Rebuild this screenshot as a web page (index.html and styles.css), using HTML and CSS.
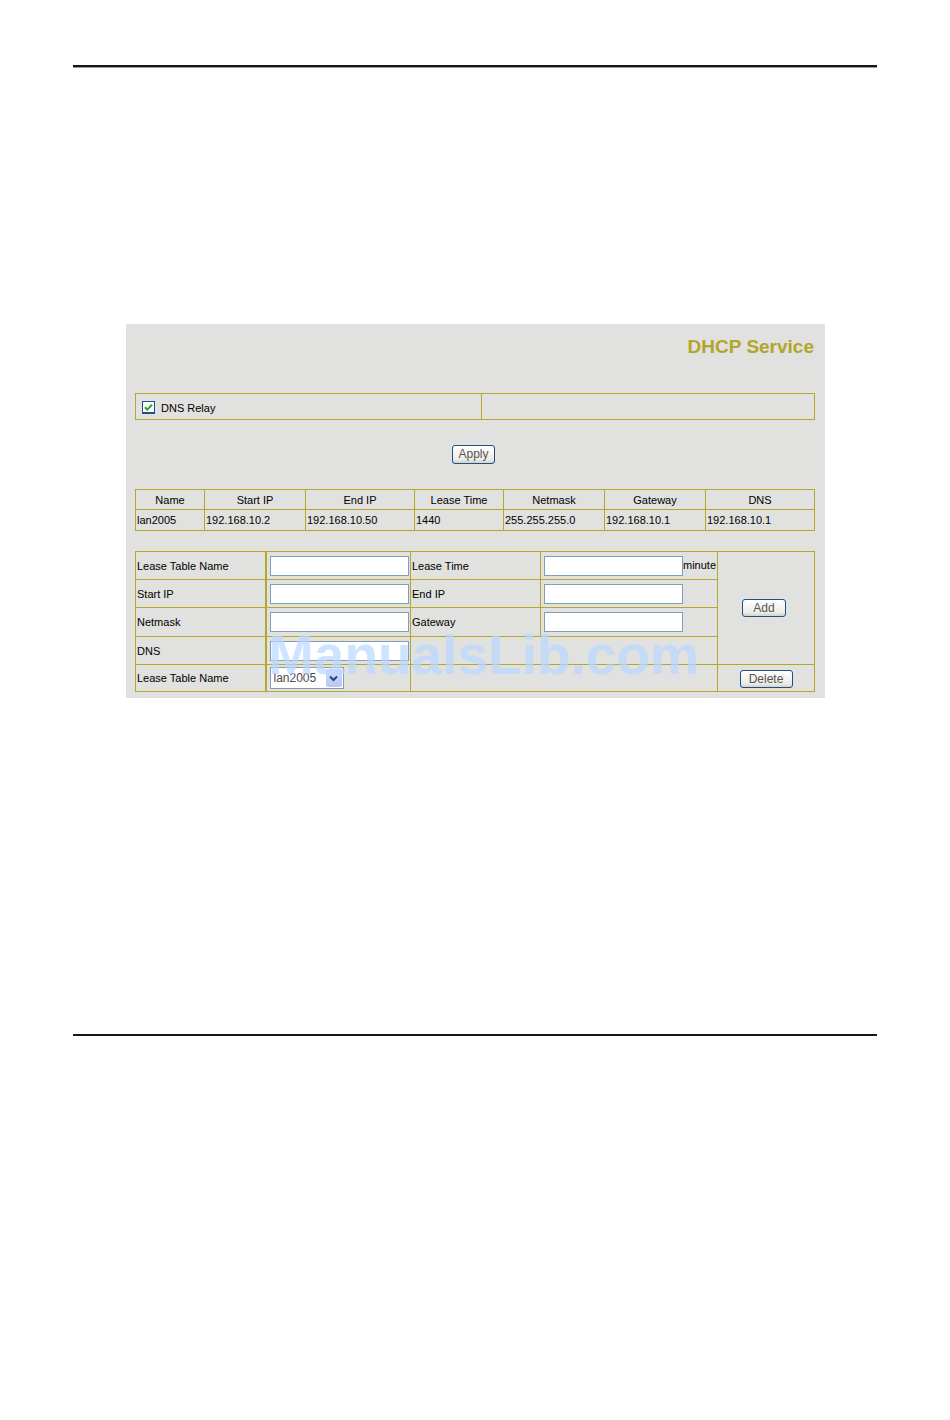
FILE: index.html
```html
<!DOCTYPE html>
<html lang="en">
<head>
    <meta charset="UTF-8">
    <meta name="viewport" content="width=device-width, initial-scale=1.0">
    <title>DHCP Service</title>
    <link rel="stylesheet" href="styles.css">
</head>
<body>
    <div class="page">
        <div class="rule"></div>

        <div class="panel">
            <h1 class="title">DHCP Service</h1>

            <!-- DNS relay switch -->
            <table class="grid relay">
                <colgroup>
                    <col class="w-346">
                    <col class="w-333">
                </colgroup>
                <tr>
                    <td>
                        <label class="check">
                            <svg class="check-box" width="13" height="13" viewBox="0 0 13 13">
                                <rect x="0.5" y="0.5" width="12" height="12" fill="#ffffff" stroke="#1c5180"/>
                                <rect x="0" y="11" width="13" height="2" fill="#1c5180"/>
                                <path d="M3 6.2 L5.3 8.6 L10 3.6" fill="none" stroke="#21a321" stroke-width="2"/>
                            </svg>
                            DNS Relay
                        </label>
                    </td>
                    <td></td>
                </tr>
            </table>

            <div class="apply-row">
                <button class="btn btn-apply">Apply</button>
            </div>

            <!-- Lease tables -->
            <table class="grid list">
                <colgroup>
                    <col class="w-69">
                    <col class="w-101">
                    <col class="w-109">
                    <col class="w-89">
                    <col class="w-101">
                    <col class="w-101">
                    <col class="w-109">
                </colgroup>
                <tr class="head">
                    <th>Name</th>
                    <th>Start IP</th>
                    <th>End IP</th>
                    <th>Lease Time</th>
                    <th>Netmask</th>
                    <th>Gateway</th>
                    <th>DNS</th>
                </tr>
                <tr class="data">
                    <td>lan2005</td>
                    <td>192.168.10.2</td>
                    <td>192.168.10.50</td>
                    <td>1440</td>
                    <td>255.255.255.0</td>
                    <td>192.168.10.1</td>
                    <td>192.168.10.1</td>
                </tr>
            </table>

            <!-- Add / delete form -->
            <table class="grid form">
                <colgroup>
                    <col class="w-130">
                    <col class="w-145">
                    <col class="w-130">
                    <col class="w-177">
                    <col class="w-97">
                </colgroup>
                <tr>
                    <td>Lease Table Name</td>
                    <td class="field"><input type="text" class="text-input"></td>
                    <td>Lease Time</td>
                    <td class="field"><input type="text" class="text-input">minute</td>
                    <td rowspan="4" class="action"><button class="btn btn-add">Add</button></td>
                </tr>
                <tr>
                    <td>Start IP</td>
                    <td class="field"><input type="text" class="text-input"></td>
                    <td>End IP</td>
                    <td class="field"><input type="text" class="text-input"></td>
                </tr>
                <tr class="tall">
                    <td>Netmask</td>
                    <td class="field"><input type="text" class="text-input"></td>
                    <td>Gateway</td>
                    <td class="field"><input type="text" class="text-input"></td>
                </tr>
                <tr>
                    <td>DNS</td>
                    <td class="field"><input type="text" class="text-input"></td>
                    <td colspan="2"></td>
                </tr>
                <tr class="short">
                    <td>Lease Table Name</td>
                    <td class="field">
                        <span class="select">
                            <select>
                                <option>lan2005</option>
                            </select>
                            <span class="select-arrow">
                                <svg width="9" height="7" viewBox="0 0 9 7">
                                    <path d="M1 1.5 L4.5 5 L8 1.5" fill="none" stroke="#29437a" stroke-width="2"/>
                                </svg>
                            </span>
                        </span>
                    </td>
                    <td colspan="2"></td>
                    <td class="action"><button class="btn btn-delete">Delete</button></td>
                </tr>
            </table>

            <div class="watermark">ManualsLib.com</div>
        </div>

        <div class="rule rule-bottom"></div>
    </div>
</body>
</html>
```

FILE: styles.css
```css
:root {
    --olive: #b4a82c;
    --title: #b1a62a;
    --panel: #e1e1df;
    --navy: #1c5180;
    --field-border: #7f9db9;
}

body {
    margin: 0;
    background: #ffffff;
    font-family: 'Liberation Sans', Arial, sans-serif;
    color: #000000;
}

.page {
    width: 950px;
    padding-top: 65px;
}

.rule {
    width: 804px;
    height: 2px;
    margin-left: 73px;
    background: #161616;
    box-shadow: 0 1px 0 #9a9a9a;
}

.rule-bottom {
    margin-top: 336px;
}

.panel {
    position: relative;
    width: 699px;
    height: 374px;
    margin: 257px 0 0 126px;
    padding: 13px 10px 0 9px;
    box-sizing: border-box;
    background: var(--panel);
}

.title {
    margin: 0 1px 0 0;
    text-align: right;
    font-size: 19px;
    line-height: 20px;
    font-weight: bold;
    color: var(--title);
}

/* tables */
.grid {
    width: 679px;
    border-collapse: collapse;
    table-layout: fixed;
    font-size: 11px;
}

.grid td,
.grid th {
    border: 1px solid var(--olive);
    padding: 0 1px;
    font-weight: normal;
    white-space: nowrap;
    overflow: hidden;
}

.w-346 { width: 346px; }
.w-333 { width: 333px; }
.w-69 { width: 69px; }
.w-89 { width: 89px; }
.w-97 { width: 97px; }
.w-101 { width: 101px; }
.w-109 { width: 109px; }
.w-130 { width: 130px; }
.w-145 { width: 145px; }
.w-177 { width: 177px; }

.relay {
    margin-top: 36px;
}

.relay td {
    height: 25px;
}

.check {
    display: flex;
    align-items: center;
    gap: 6px;
    padding-left: 5px;
    padding-top: 2px;
}

.check-box {
    display: block;
}

.apply-row {
    margin-top: 25px;
    padding-right: 3px;
    text-align: center;
    height: 19px;
}

.list {
    margin-top: 25px;
}

.list .head th {
    height: 19px;
    text-align: center;
}

.list .data td {
    height: 20px;
    text-align: left;
}

.form {
    margin-top: 20px;
}

.form td {
    height: 27px;
}

.form .tall td {
    height: 28px;
}

.form .short td {
    height: 26px;
}

.form td.field {
    padding-left: 2px;
}

.form td:nth-child(2) {
    border-left-width: 2px;
}

.form td.action {
    text-align: center;
    border-left-width: 1px;
}

.text-input {
    box-sizing: border-box;
    width: 139px;
    height: 20px;
    margin: 0 0 0 1px;
    padding: 0 2px;
    border: 1px solid var(--field-border);
    background: #ffffff;
    vertical-align: middle;
    font-size: 11px;
}

/* select */
.select {
    position: relative;
    display: inline-block;
    box-sizing: border-box;
    width: 74px;
    height: 22px;
    margin-left: 1px;
    border: 1px solid var(--field-border);
    background: #ffffff;
    vertical-align: middle;
}

.select select {
    appearance: none;
    -webkit-appearance: none;
    width: 100%;
    height: 100%;
    margin: 0;
    padding: 0 0 0 3px;
    border: 0;
    background: transparent;
    font-family: 'Liberation Sans', Arial, sans-serif;
    font-size: 12px;
    color: #4a4a4a;
}

.select-arrow {
    position: absolute;
    top: 1px;
    right: 1px;
    width: 16px;
    height: 18px;
    border-radius: 2px;
    background: linear-gradient(#cfdcfb, #b6c8f4);
    display: flex;
    align-items: center;
    justify-content: center;
}

/* buttons */
.btn {
    box-sizing: border-box;
    height: 19px;
    padding: 0;
    border: 1px solid var(--navy);
    border-radius: 3px;
    background: linear-gradient(#ffffff, #ecebe6 80%, #d6d0c5);
    font-family: 'Liberation Sans', Arial, sans-serif;
    font-size: 12px;
    line-height: 17px;
    color: #555555;
    vertical-align: middle;
}

.btn-apply {
    width: 43px;
}

.btn-add {
    width: 44px;
    height: 18px;
    line-height: 16px;
    margin-left: -4px;
}

.btn-delete {
    width: 53px;
    height: 18px;
    line-height: 16px;
    margin-top: 2px;
}

.watermark {
    position: absolute;
    left: 142px;
    top: 304px;
    font-size: 55px;
    line-height: 1;
    font-weight: bold;
    white-space: nowrap;
    color: rgba(185, 215, 255, 0.7);
    pointer-events: none;
}
```
